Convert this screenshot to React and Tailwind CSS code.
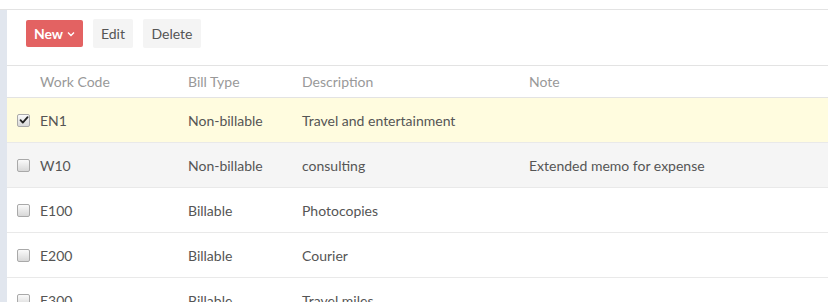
import React from "react";

const rows = [
  { code: "EN1", bill: "Non-billable", desc: "Travel and entertainment", note: "", checked: true, bg: "bg-[#fffcdf]" },
  { code: "W10", bill: "Non-billable", desc: "consulting", note: "Extended memo for expense", checked: false, bg: "bg-[#f5f5f5]" },
  { code: "E100", bill: "Billable", desc: "Photocopies", note: "", checked: false, bg: "bg-white" },
  { code: "E200", bill: "Billable", desc: "Courier", note: "", checked: false, bg: "bg-white" },
  { code: "E300", bill: "Billable", desc: "Travel miles", note: "", checked: false, bg: "bg-white" },
];

function Check({ checked }) {
  return (
    <div className="w-[13px] h-[13px] rounded-[2px] border border-[#a9a9a9] bg-gradient-to-b from-[#fafafa] to-[#d8d8d8] flex items-center justify-center">
      {checked && (
        <svg width="10" height="10" viewBox="0 0 10 10">
          <path d="M1.5 5.2 L3.8 7.6 L8.6 2.2" stroke="#222" strokeWidth="1.8" fill="none" strokeLinecap="round" strokeLinejoin="round" />
        </svg>
      )}
    </div>
  );
}

const cols = "grid grid-cols-[33px_148px_114px_227px_1fr]";

export default function App() {
  return (
    <div className="w-[828px] h-[302px] overflow-hidden bg-white text-[14px] text-[#555]" style={{ fontFamily: "Lato, 'Noto Sans', sans-serif" }}>
      <div className="h-[10px] border-b border-[#e3e3e3]" />
      <div className="flex">
        <div className="w-[7px] bg-[#e1e6ee] shrink-0" />
        <div className="flex-1">
          <div className="h-[56px] pt-[9px] pl-[19px] flex items-start gap-[10px] border-b border-[#e3e3e3]">
            <button className="mt-[1px] h-[27px] w-[57px] rounded-[2px] bg-[#e36262] text-white font-bold flex items-center justify-center gap-[4px]">
              <span>New</span>
              <svg width="8" height="6" viewBox="0 0 8 6"><path d="M1 1.5 L4 4.5 L7 1.5" stroke="#fff" strokeWidth="1.4" fill="none" /></svg>
            </button>
            <button className="h-[29px] w-[40px] rounded-[2px] bg-[#f4f4f4] text-[#555]">Edit</button>
            <button className="h-[29px] w-[58px] rounded-[2px] bg-[#f4f4f4] text-[#555]">Delete</button>
          </div>
          <div className={`${cols} h-[32px] items-center border-b border-[#e3e3e3] text-[#999]`}>
            <div />
            <div>Work Code</div>
            <div>Bill Type</div>
            <div>Description</div>
            <div>Note</div>
          </div>
          {rows.map((r) => (
            <div key={r.code} className={`${cols} h-[45px] items-center border-b border-[#e9e9e9] ${r.bg}`}>
              <div className="pl-[10px]"><Check checked={r.checked} /></div>
              <div>{r.code}</div>
              <div>{r.bill}</div>
              <div>{r.desc}</div>
              <div>{r.note}</div>
            </div>
          ))}
        </div>
      </div>
    </div>
  );
}
